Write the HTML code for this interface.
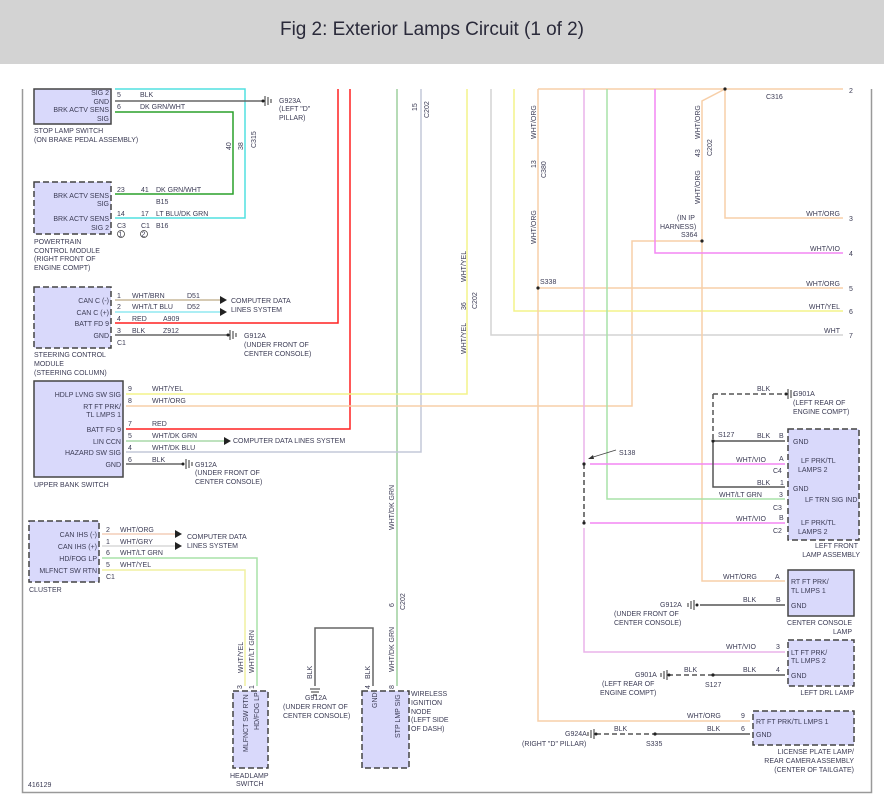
<!DOCTYPE html>
<html><head><meta charset="utf-8"><style>
html,body{margin:0;padding:0;background:#fff;}
svg{display:block;}
text{font-family:"Liberation Sans",sans-serif;font-size:7px;fill:#3c3c55;}
.r{text-anchor:end;}
.t{font-size:19px;fill:#2a2a3a;}
</style></head><body>
<svg width="884" height="803" viewBox="0 0 884 803" xmlns="http://www.w3.org/2000/svg">
<rect x="0" y="0" width="884" height="64" fill="#d3d3d3"/>
<text class="t" x="280" y="35" textLength="304">Fig 2: Exterior Lamps Circuit (1 of 2)</text>
<path d="M22.5 89 V792.5 H871.5 V89" fill="none" stroke="#999" stroke-width="1.5"/>

<g fill="none" stroke-width="1.5">
<path d="M115 89 H245 V218 H115" stroke="#50e0e0"/>
<path d="M115 101 H263" stroke="#666"/>
<path d="M115 112 H233 V194 H115" stroke="#2aa02a"/>
<path d="M115 300 H220" stroke="#c8b89a"/>
<path d="M115 312 H220" stroke="#90e8f0"/>
<path d="M338 89 V323 H115" stroke="#ff2020"/>
<path d="M350 89 V429 H126" stroke="#ff2020"/>
<path d="M115 335 H228" stroke="#666"/>
<path d="M397 89 V686" stroke="#9ecf9e"/>
<path d="M421 89 V452 H126" stroke="#c4c8d8"/>
<path d="M467 89 V394 H126" stroke="#f3f38a"/>
<path d="M126 406 H632 V241 H702" stroke="#f7cfa8"/>
<path d="M126 441 H224" stroke="#a8d8a8"/>
<path d="M126 464 H183" stroke="#666"/>
<path d="M102 534 H175" stroke="#f3cdb8"/>
<path d="M102 546 H175" stroke="#d8d8d8"/>
<path d="M102 558 H257 V686" stroke="#a8e2a8"/>
<path d="M102 570 H245 V686" stroke="#f0f0a0"/>
<path d="M315 686 V628 H373 V686" stroke="#666"/>
<path d="M491 89 V335 H843" stroke="#d4d4d4"/>
<path d="M514 89 V311 H843" stroke="#f3f38a"/>
<path d="M538 89 H725 H843" stroke="#f7cfa8"/>
<path d="M538 89 V721 H750" stroke="#f7cfa8"/>
<path d="M538 288 H843" stroke="#f7cfa8"/>
<path d="M725 89 V218 H843" stroke="#f7cfa8"/>
<path d="M725 89 L702 101 V581 H785" stroke="#f7cfa8"/>
<path d="M584 89 V464 M584 528 V652 H785" stroke="#eab4ea"/>
<path d="M607 89 V499 H785" stroke="#a8e2a8"/>
<path d="M655 89 V253 H843" stroke="#f486f4"/>
<path d="M590 464 H785 M590 523 H785" stroke="#f486f4"/>
<path d="M713 441 H785 M713 441 V487 H785" stroke="#555"/>
<path d="M713 394 H786 M713 394 V441" stroke="#555" stroke-dasharray="5,3"/>
<path d="M584 464 V523" stroke="#222" stroke-dasharray="5,3" stroke-width="1.2"/>
<path d="M700 605 H785" stroke="#555"/>
<path d="M713 675 H785" stroke="#555"/>
<path d="M668 675 H713" stroke="#555" stroke-dasharray="5,3"/>
<path d="M655 734 H750" stroke="#555"/>
<path d="M596 734 H655" stroke="#555" stroke-dasharray="5,3"/>
</g>
<path d="M616 450 L590 458" stroke="#444" stroke-width="0.8" fill="none"/>
<path d="M588 459 L593 455 L594 459Z" fill="#333"/>

<g stroke="#444" stroke-width="1.5" fill="#d9d9fb">
<rect x="34" y="89" width="77" height="35"/>
<rect x="34" y="182" width="77" height="52" stroke-dasharray="6,3"/>
<rect x="34" y="287" width="77" height="61" stroke-dasharray="6,3"/>
<rect x="34" y="381" width="89" height="96"/>
<rect x="29" y="521" width="70" height="61" stroke-dasharray="6,3"/>
<rect x="233" y="691" width="35" height="77" stroke-dasharray="6,3"/>
<rect x="362" y="691" width="47" height="77" stroke-dasharray="6,3"/>
<rect x="788" y="429" width="71" height="111" stroke-dasharray="6,3"/>
<rect x="788" y="570" width="66" height="46"/>
<rect x="788" y="640" width="66" height="46" stroke-dasharray="6,3"/>
<rect x="753" y="711" width="101" height="34" stroke-dasharray="6,3"/>
</g>

<g stroke="#333" stroke-width="1" fill="none">
<path d="M265 96 V106 M268 97 V105 M271 99 V103"/>
<path d="M230 330 V340 M233 331 V339 M236 333 V337"/>
<path d="M186 459 V469 M189 460 V468 M192 462 V466"/>
<path d="M694 600 V610 M691 601 V609 M688 603 V607"/>
<path d="M667 670 V680 M664 671 V679 M661 673 V677"/>
<path d="M594 729 V739 M591 730 V738 M588 732 V736"/>
<path d="M788 389 V399 M791 390 V398 M794 392 V396"/>
<path d="M310 689 H320 M311 692 H319 M313 695 H317"/>
</g>
<g fill="#222">
<circle cx="263" cy="101" r="1.5"/><circle cx="228" cy="335" r="1.5"/><circle cx="183" cy="464" r="1.5"/>
<circle cx="697" cy="605" r="1.5"/><circle cx="669" cy="675" r="1.5"/><circle cx="596" cy="734" r="1.5"/><circle cx="786" cy="394" r="1.5"/>
<circle cx="725" cy="89" r="1.6"/><circle cx="702" cy="241" r="1.6"/><circle cx="538" cy="288" r="1.6"/>
<circle cx="713" cy="441" r="1.6"/><circle cx="713" cy="675" r="1.6"/><circle cx="655" cy="734" r="1.6"/>
<circle cx="584" cy="464" r="1.6"/><circle cx="584" cy="523" r="1.6"/>
<path d="M220 296 L227 300 L220 304Z M220 308 L227 312 L220 316Z M224 437 L231 441 L224 445Z M175 530 L182 534 L175 538Z M175 542 L182 546 L175 550Z"/>
</g>
<g fill="none" stroke="#444" stroke-width="0.8">
<circle cx="121" cy="234" r="3.5"/><circle cx="144" cy="234" r="3.5"/>
</g>

<text class="r" x="109" y="95">SIG 2</text><text class="r" x="109" y="104">GND</text>
<text class="r" x="109" y="112">BRK ACTV SENS</text><text class="r" x="109" y="121">SIG</text>
<text x="117" y="97">5</text><text x="140" y="97">BLK</text><text x="117" y="109">6</text><text x="140" y="109">DK GRN/WHT</text>
<text x="279" y="103">G923A</text><text x="279" y="111">(LEFT "D"</text><text x="279" y="120">PILLAR)</text>
<text x="34" y="133">STOP LAMP SWITCH</text><text x="34" y="142">(ON BRAKE PEDAL ASSEMBLY)</text>
<text transform="translate(231,150) rotate(-90)">40</text>
<text transform="translate(243,150) rotate(-90)">38</text>
<text transform="translate(256,148) rotate(-90)">C315</text>
<text class="r" x="109" y="198">BRK ACTV SENS</text><text class="r" x="109" y="206">SIG</text>
<text class="r" x="109" y="221">BRK ACTV SENS</text><text class="r" x="109" y="230">SIG 2</text>
<text x="117" y="192">23</text><text x="141" y="192">41</text><text x="156" y="192">DK GRN/WHT</text>
<text x="156" y="204">B15</text>
<text x="117" y="216">14</text><text x="141" y="216">17</text><text x="156" y="216">LT BLU/DK GRN</text>
<text x="117" y="228">C3</text><text x="141" y="228">C1</text><text x="156" y="228">B16</text>
<text x="118.5" y="236.5" font-size="6">1</text><text x="141.5" y="236.5" font-size="6">2</text>
<text x="34" y="244">POWERTRAIN</text><text x="34" y="253">CONTROL MODULE</text><text x="34" y="261">(RIGHT FRONT OF</text><text x="34" y="270">ENGINE COMPT)</text>
<text class="r" x="109" y="303">CAN C (-)</text><text class="r" x="109" y="315">CAN C (+)</text>
<text class="r" x="109" y="326">BATT FD 9</text><text class="r" x="109" y="338">GND</text>
<text x="117" y="298">1</text><text x="132" y="298">WHT/BRN</text><text x="187" y="298">D51</text>
<text x="117" y="309">2</text><text x="132" y="309">WHT/LT BLU</text><text x="187" y="309">D52</text>
<text x="117" y="321">4</text><text x="132" y="321">RED</text><text x="163" y="321">A909</text>
<text x="117" y="333">3</text><text x="132" y="333">BLK</text><text x="163" y="333">Z912</text>
<text x="117" y="345">C1</text>
<text x="231" y="303">COMPUTER DATA</text><text x="231" y="312">LINES SYSTEM</text>
<text x="244" y="338">G912A</text><text x="244" y="347">(UNDER FRONT OF</text><text x="244" y="356">CENTER CONSOLE)</text>
<text x="34" y="357">STEERING CONTROL</text><text x="34" y="366">MODULE</text><text x="34" y="375">(STEERING COLUMN)</text>
<text transform="translate(417,111) rotate(-90)">15</text>
<text transform="translate(429,118) rotate(-90)">C202</text>

<text class="r" x="121" y="397">HDLP LVNG SW SIG</text><text class="r" x="121" y="409">RT FT PRK/</text><text class="r" x="121" y="417">TL LMPS 1</text>
<text class="r" x="121" y="432">BATT FD 9</text><text class="r" x="121" y="444">LIN CCN</text><text class="r" x="121" y="455">HAZARD SW SIG</text><text class="r" x="121" y="467">GND</text>
<text x="128" y="391">9</text><text x="152" y="391">WHT/YEL</text>
<text x="128" y="403">8</text><text x="152" y="403">WHT/ORG</text>
<text x="128" y="426">7</text><text x="152" y="426">RED</text>
<text x="128" y="438">5</text><text x="152" y="438">WHT/DK GRN</text>
<text x="128" y="450">4</text><text x="152" y="450">WHT/DK BLU</text>
<text x="128" y="462">6</text><text x="152" y="462">BLK</text>
<text x="233" y="443">COMPUTER DATA LINES SYSTEM</text>
<text x="195" y="467">G912A</text><text x="195" y="475">(UNDER FRONT OF</text><text x="195" y="484">CENTER CONSOLE)</text>
<text x="34" y="487">UPPER BANK SWITCH</text>

<text class="r" x="97" y="537">CAN IHS (-)</text><text class="r" x="97" y="549">CAN IHS (+)</text><text class="r" x="97" y="561">HD/FOG LP</text><text class="r" x="97" y="573">MLFNCT SW RTN</text>
<text x="106" y="532">2</text><text x="120" y="532">WHT/ORG</text>
<text x="106" y="544">1</text><text x="120" y="544">WHT/GRY</text>
<text x="106" y="555">6</text><text x="120" y="555">WHT/LT GRN</text>
<text x="106" y="567">5</text><text x="120" y="567">WHT/YEL</text>
<text x="106" y="579">C1</text>
<text x="187" y="539">COMPUTER DATA</text><text x="187" y="548">LINES SYSTEM</text>
<text x="29" y="592">CLUSTER</text>
<text transform="translate(243,673) rotate(-90)">WHT/YEL</text>
<text transform="translate(254,673) rotate(-90)">WHT/LT GRN</text>
<text transform="translate(242,689) rotate(-90)">3</text>
<text transform="translate(254,689) rotate(-90)">1</text>
<text transform="translate(248,752) rotate(-90)">MLFNCT SW RTN</text>
<text transform="translate(259,730) rotate(-90)">HD/FOG LP</text>
<text x="230" y="778">HEADLAMP</text><text x="236" y="786">SWITCH</text>
<text transform="translate(312,679) rotate(-90)">BLK</text>
<text x="305" y="700">G912A</text><text x="283" y="709">(UNDER FRONT OF</text><text x="283" y="718">CENTER CONSOLE)</text>
<text transform="translate(370,679) rotate(-90)">BLK</text>
<text transform="translate(370,689) rotate(-90)">4</text>
<text transform="translate(394,689) rotate(-90)">8</text>
<text transform="translate(394,672) rotate(-90)">WHT/DK GRN</text>
<text transform="translate(394,530) rotate(-90)">WHT/DK GRN</text>
<text transform="translate(394,607) rotate(-90)">6</text>
<text transform="translate(405,610) rotate(-90)">C202</text>
<text transform="translate(377,708) rotate(-90)">GND</text>
<text transform="translate(400,738) rotate(-90)">STP LMP SIG</text>
<text x="411" y="696">WIRELESS</text><text x="411" y="705">IGNITION</text><text x="411" y="714">NODE</text><text x="411" y="722">(LEFT SIDE</text><text x="411" y="731">OF DASH)</text>
<text x="28" y="787">416129</text>

<text transform="translate(466,282) rotate(-90)">WHT/YEL</text>
<text transform="translate(466,354) rotate(-90)">WHT/YEL</text>
<text transform="translate(466,310) rotate(-90)">36</text>
<text transform="translate(477,309) rotate(-90)">C202</text>
<text transform="translate(536,139) rotate(-90)">WHT/ORG</text>
<text transform="translate(536,244) rotate(-90)">WHT/ORG</text>
<text transform="translate(536,168) rotate(-90)">13</text>
<text transform="translate(546,178) rotate(-90)">C380</text>
<text transform="translate(700,139) rotate(-90)">WHT/ORG</text>
<text transform="translate(700,204) rotate(-90)">WHT/ORG</text>
<text transform="translate(700,157) rotate(-90)">43</text>
<text transform="translate(712,156) rotate(-90)">C202</text>
<text x="766" y="99">C316</text>
<text x="849" y="93">2</text>
<text x="677" y="220">(IN IP</text><text x="660" y="229">HARNESS)</text><text x="681" y="237">S364</text>
<text class="r" x="840" y="216">WHT/ORG</text><text x="849" y="221">3</text>
<text class="r" x="840" y="251">WHT/VIO</text><text x="849" y="256">4</text>
<text x="540" y="284">S338</text>
<text class="r" x="840" y="286">WHT/ORG</text><text x="849" y="291">5</text>
<text class="r" x="840" y="309">WHT/YEL</text><text x="849" y="314">6</text>
<text class="r" x="840" y="333">WHT</text><text x="849" y="338">7</text>

<text x="757" y="391">BLK</text>
<text x="793" y="396">G901A</text><text x="793" y="405">(LEFT REAR OF</text><text x="793" y="414">ENGINE COMPT)</text>
<text x="718" y="437">S127</text>
<text x="757" y="438">BLK</text><text x="779" y="438">B</text>
<text x="619" y="455">S138</text>
<text x="736" y="462">WHT/VIO</text><text x="779" y="461">A</text><text x="773" y="473">C4</text>
<text x="757" y="485">BLK</text><text x="780" y="485">1</text>
<text x="719" y="497">WHT/LT GRN</text><text x="779" y="497">3</text><text x="773" y="510">C3</text>
<text x="736" y="521">WHT/VIO</text><text x="779" y="520">B</text><text x="773" y="533">C2</text>
<text x="793" y="444">GND</text><text x="801" y="463">LF PRK/TL</text><text x="798" y="472">LAMPS 2</text>
<text x="793" y="491">GND</text><text x="805" y="502">LF TRN SIG IND</text>
<text x="801" y="525">LF PRK/TL</text><text x="798" y="534">LAMPS 2</text>
<text class="r" x="858" y="548">LEFT FRONT</text><text class="r" x="860" y="557">LAMP ASSEMBLY</text>
<text x="723" y="579">WHT/ORG</text><text x="775" y="579">A</text>
<text x="743" y="602">BLK</text><text x="776" y="602">B</text>
<text x="791" y="584">RT FT PRK/</text><text x="791" y="593">TL LMPS 1</text><text x="791" y="608">GND</text>
<text x="660" y="607">G912A</text><text x="614" y="616">(UNDER FRONT OF</text><text x="614" y="625">CENTER CONSOLE)</text>
<text class="r" x="852" y="625">CENTER CONSOLE</text><text class="r" x="852" y="634">LAMP</text>
<text x="726" y="649">WHT/VIO</text><text x="776" y="649">3</text>
<text x="791" y="655">LT FT PRK/</text><text x="791" y="663">TL LMPS 2</text><text x="791" y="678">GND</text>
<text x="684" y="672">BLK</text><text x="743" y="672">BLK</text><text x="776" y="672">4</text>
<text x="635" y="677">G901A</text><text x="602" y="686">(LEFT REAR OF</text><text x="600" y="695">ENGINE COMPT)</text>
<text x="705" y="687">S127</text>
<text class="r" x="854" y="695">LEFT DRL LAMP</text>
<text x="687" y="718">WHT/ORG</text><text x="741" y="718">9</text>
<text x="614" y="731">BLK</text><text x="707" y="731">BLK</text><text x="741" y="731">6</text>
<text x="756" y="724">RT FT PRK/TL LMPS 1</text><text x="756" y="737">GND</text>
<text x="565" y="736">G924A</text><text x="522" y="746">(RIGHT "D" PILLAR)</text><text x="646" y="746">S335</text>
<text class="r" x="854" y="754">LICENSE PLATE LAMP/</text><text class="r" x="854" y="763">REAR CAMERA ASSEMBLY</text><text class="r" x="854" y="772">(CENTER OF TAILGATE)</text>
</svg>
</body></html>
